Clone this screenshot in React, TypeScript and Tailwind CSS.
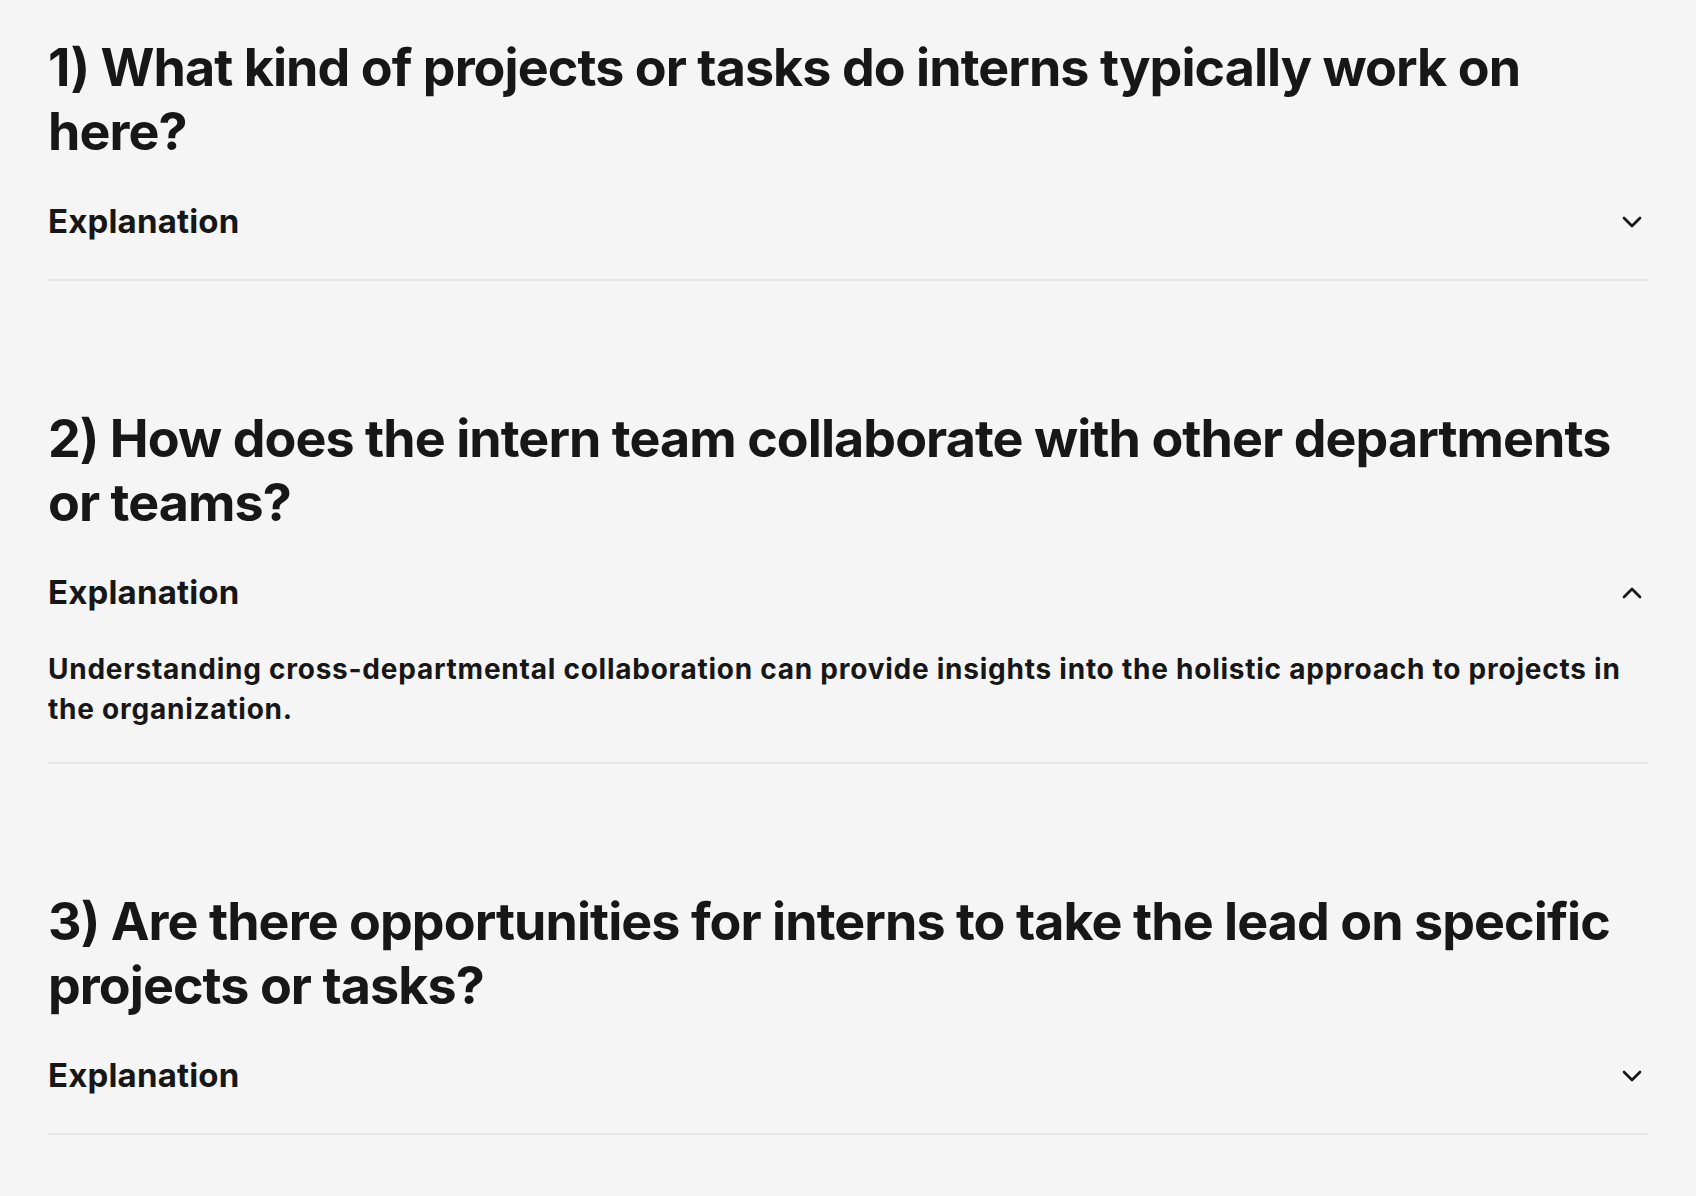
import { useState } from "react";
import { ChevronDown, ChevronUp } from "lucide-react";

interface Question {
  title: string;
  explanation: string;
}

const questions: Question[] = [
  {
    title: "1) What kind of projects or tasks do interns typically work on here?",
    explanation:
      "Knowing the type of work you'll be doing helps set expectations and shows how the internship fits into your goals.",
  },
  {
    title: "2) How does the intern team collaborate with other departments or teams?",
    explanation:
      "Understanding cross-departmental collaboration can provide insights into the holistic approach to projects in the organization.",
  },
  {
    title: "3) Are there opportunities for interns to take the lead on specific projects or tasks?",
    explanation:
      "This shows your initiative and helps you learn how much ownership interns are trusted with.",
  },
];

const QuestionItem = ({
  question,
  open,
  onToggle,
}: {
  question: Question;
  open: boolean;
  onToggle: () => void;
}) => {
  return (
    <div className="pt-[36px] pb-[33px] mb-[90px] border-b-2 border-[#e6e6e6]">
      <h2 className="text-[52px] leading-[64px] font-bold tracking-[-0.018em] text-[#171717]">
        {question.title}
      </h2>
      <button
        onClick={onToggle}
        className="mt-[34px] h-[48px] w-full flex items-center justify-between text-left cursor-pointer"
      >
        <span className="text-[33px] font-bold tracking-[0.005em] text-[#171717]">Explanation</span>
        {open ? (
          <ChevronUp size={32} strokeWidth={2} className="text-[#171717]" />
        ) : (
          <ChevronDown size={32} strokeWidth={2} className="text-[#171717]" />
        )}
      </button>
      {open && (
        <p className="mt-[32px] text-[28px] leading-[40px] font-bold tracking-[0.027em] text-[#171717]">
          {question.explanation}
        </p>
      )}
    </div>
  );
};

export default function App() {
  const [openIndex, setOpenIndex] = useState<number | null>(1);

  return (
    <div
      className="min-h-screen bg-[#f5f5f5] px-12"
      style={{ fontFamily: "Inter, 'Noto Sans', sans-serif" }}
    >
      {questions.map((q, i) => (
        <QuestionItem
          key={i}
          question={q}
          open={openIndex === i}
          onToggle={() => setOpenIndex(openIndex === i ? null : i)}
        />
      ))}
    </div>
  );
}
